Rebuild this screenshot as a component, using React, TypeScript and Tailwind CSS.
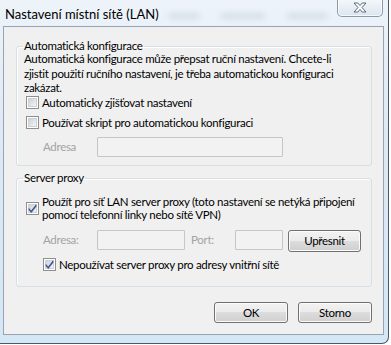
import React from "react";

const font = "font-[family-name:Lato,sans-serif] text-[11.5px] tracking-[-0.3px]";

function CheckBox({ checked, id }: { checked?: boolean; id: string }) {
  return (
    <svg width="13" height="13" viewBox="0 0 13 13" className="shrink-0">
      <defs>
        <linearGradient id={id} x1="0" y1="0" x2="1" y2="1">
          <stop offset="0" stopColor="#cbcfd5" />
          <stop offset="1" stopColor="#f6f6f6" />
        </linearGradient>
      </defs>
      <rect x="0.5" y="0.5" width="12" height="12" fill="#fff" stroke="#8e8f8f" />
      <rect x="2.5" y="2.5" width="8" height="8" fill={`url(#${id})`} stroke="#cdd0d5" />
      {checked && (
        <path d="M3 6.5 L5.2 9 L10 2.8 L10 4.6 L5.3 10.6 L3 8 Z" fill="#3d5da8" stroke="#1c3774" strokeWidth="0.5" />
      )}
    </svg>
  );
}

function Button({ label, w }: { label: string; w: string }) {
  return (
    <button
      className={`${w} rounded-[3px] border border-[#707070] shadow-[inset_0_0_0_1px_#fbfbfb] bg-[linear-gradient(#f2f2f2_0%,#ebebeb_48%,#dddddd_50%,#cfcfcf_100%)] text-black leading-none`}
    >
      {label}
    </button>
  );
}

function Field({ w }: { w: string }) {
  return <div className={`${w} h-[20px] border border-[#c3c7cb] rounded-[1px] bg-[#f2f2f2]`} />;
}

export default function App() {
  return (
    <div className={`w-[391px] h-[345px] bg-white overflow-hidden ${font} text-black`}>
      <div className="w-[389px] h-[344px] border-r border-b border-[#4c5866] rounded-br-[7px] bg-[linear-gradient(#edf3f9,#dde9f4_40%,#d4e7f4)] flex flex-col">
        {/* title bar */}
        <div className="h-[26px] flex items-start">
          <span className="pl-[5px] pt-[5px] text-[13px] tracking-[0px] text-black whitespace-nowrap">Nastavení místní sítě (LAN)</span>
          <div className="flex-1 flex items-center gap-[22px] pt-[14px] pl-[10px] opacity-60">
            <div className="w-[30px] h-[4px] bg-[#b8c2cc] blur-[3px]" />
            <div className="w-[44px] h-[4px] bg-[#b8c2cc] blur-[3px]" />
            <div className="w-[40px] h-[4px] bg-[#b8c2cc] blur-[3px]" />
          </div>
          <div className="w-[46px] h-[18px] mr-[5px] -mt-[1px] rounded-b-[5px] border border-t-0 border-[#8a9aab] bg-[linear-gradient(#f4f8fb,#dbe5ef)] shadow-[inset_0_0_0_1px_rgba(255,255,255,0.7)] flex items-center justify-center">
            <svg width="14" height="11" viewBox="0 0 14 11">
              <path
                d="M1 1 H4.8 L7 3.6 L9.2 1 H13 L9 5.5 L13 10 H9.2 L7 7.4 L4.8 10 H1 L5 5.5 Z"
                fill="#fff"
                stroke="#5f6b78"
                strokeWidth="1"
                strokeLinejoin="round"
              />
            </svg>
          </div>
        </div>

        {/* client area */}
        <div className="ml-[3px] mr-[4px] h-[309px] border border-[#98a4b1] bg-[#f0f0f0] pl-[12px] pr-[11px] pt-[13px] flex flex-col">
          <fieldset className="h-[126px] border border-[#d5dfe5] rounded-[3px] pl-[7px] pr-[4px] shadow-[inset_1px_1px_0_#fff]">
            <legend className="px-[1px] ml-[-1px] leading-[12px]">Automatická konfigurace</legend>
            <p className="leading-[14.5px] whitespace-nowrap">
              Automatická konfigurace může přepsat ruční nastavení. Chcete-li
              <br />
              zjistit použití ručního nastavení, je třeba automatickou konfiguraci
              <br />
              zakázat.
            </p>
            <label className="flex items-center gap-[3px] pl-[2px] h-[13px]">
              <CheckBox id="g1" />
              <span className="leading-[13px]">Automaticky zjišťovat nastavení</span>
            </label>
            <label className="flex items-center gap-[3px] pl-[2px] mt-[7px] h-[13px]">
              <CheckBox id="g2" />
              <span className="leading-[13px]">Používat skript pro automatickou konfiguraci</span>
            </label>
            <div className="flex items-center mt-[8px] pl-[19px]">
              <span className="w-[54px] text-[#a3a3a3]">Adresa</span>
              <Field w="w-[186px]" />
            </div>
          </fieldset>

          <fieldset className="mt-[6px] h-[115px] border border-[#d5dfe5] rounded-[3px] pl-[7px] pr-[4px] shadow-[inset_1px_1px_0_#fff]">
            <legend className="px-[1px] ml-[-1px] leading-[12px]">Server proxy</legend>
            <label className="flex items-center gap-[3px] pl-[2px] mt-[12px]">
              <CheckBox checked id="g3" />
              <span className="leading-[12.5px] whitespace-nowrap">
                Použít pro síť LAN server proxy (toto nastavení se netýká připojení
                <br />
                pomocí telefonní linky nebo sítě VPN)
              </span>
            </label>
            <div className="flex items-start mt-[9px] pl-[19px]">
              <span className="w-[54px] leading-[20px] text-[#a3a3a3]">Adresa:</span>
              <Field w="w-[88px]" />
              <span className="ml-[6px] w-[44px] leading-[20px] text-[#a3a3a3]">Port:</span>
              <Field w="w-[48px]" />
              <div className="ml-[5px] flex">
                <Button label="Upřesnit" w="w-[73px] h-[22px]" />
              </div>
            </div>
            <label className="flex items-center gap-[3px] pl-[19px] mt-[6px] h-[13px]">
              <CheckBox checked id="g4" />
              <span className="leading-[13px]">Nepoužívat server proxy pro adresy vnitřní sítě</span>
            </label>
          </fieldset>

          <div className="flex justify-end gap-[10px] mt-[15px]">
            <Button label="OK" w="w-[74px] h-[21px]" />
            <Button label="Storno" w="w-[74px] h-[21px]" />
          </div>
        </div>
      </div>
    </div>
  );
}
